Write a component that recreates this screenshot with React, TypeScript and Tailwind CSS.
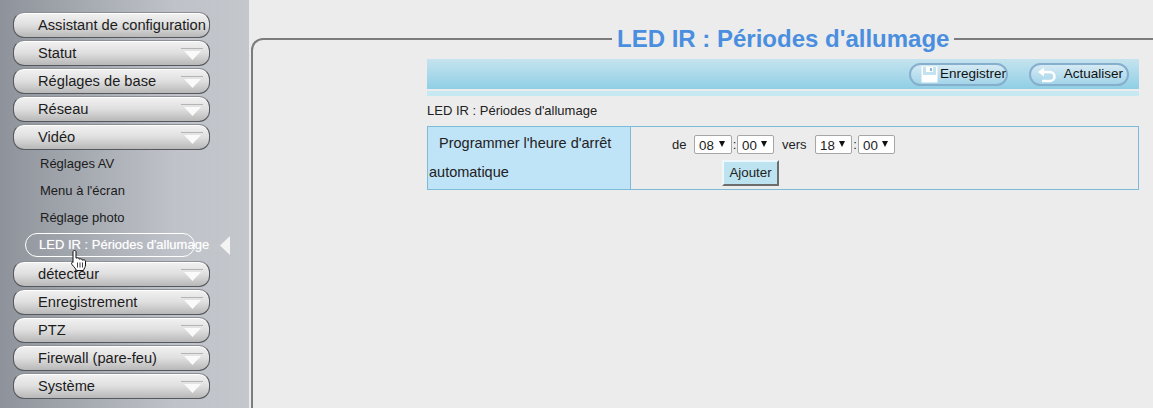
// Libraries
import { ReactNode } from "react";

const FONT = "font-['Liberation_Sans',Arial,sans-serif]";

const TOP_MENUS = ["Statut", "Réglages de base", "Réseau", "Vidéo"];
const BOTTOM_MENUS = ["détecteur", "Enregistrement", "PTZ", "Firewall (pare-feu)", "Système"];
const SUB_ITEMS = ["Réglages AV", "Menu à l'écran", "Réglage photo"];

function MenuButton({ label, arrow = true }: { label: string; arrow?: boolean }) {
  return (
    <div className="relative flex items-center h-[26px] w-[197px] pl-[24px] rounded-[11px] border border-[#55585e] border-t-[#8c8f94] bg-gradient-to-b from-[#f2f2f2] via-[#dfdfdf] to-[#b8b8b8] text-[14.67px] text-[#1c1c1c] whitespace-nowrap shadow-[inset_0_1px_0_#ffffff]">
      {label}
      {arrow && (
        <svg className="absolute right-[6px] top-[7px]" width="22" height="13" viewBox="0 0 22 13">
          <rect x="0" y="0" width="22" height="1" fill="#b4b4b4" />
          <polygon points="3,3 20,3 11.5,12" fill="#fafafa" />
        </svg>
      )}
    </div>
  );
}

function HandCursor() {
  return (
    <svg className="absolute left-[71px] top-[250px]" width="16" height="21" viewBox="0 0 16 21">
      <path
        d="M3.500 .5C4.500 .5 5 1 5 2V8H6C7 7.500 8 8 8 9H9C10 8.500 11 9 11 10H12C13 9.500 14.500 10.200 14.500 11.200V15C14.500 17 13 18.500 12.500 20.500H5.500C5 19 3 17 1 14.500C0 13 1 11.500 2 12.500V2C2 1 2.500 .5 3.500 .5Z"
        fill="#ffffff"
        stroke="#111111"
        strokeWidth="1"
      />
      <path d="M6.500 12.500v5M9 12.500v5M11.500 12.500v5" stroke="#111111" strokeWidth="0.800" />
    </svg>
  );
}

function Sidebar() {
  return (
    <aside className="relative w-[249px] shrink-0 h-[408px] pt-[12px] pl-[13px] flex flex-col gap-[2px] bg-gradient-to-r from-[#8e929a] via-[#bfc3c9] via-70% to-[#c4c7cc]">
      <MenuButton label="Assistant de configuration" arrow={false} />
      {TOP_MENUS.map((label) => (
        <MenuButton key={label} label={label} />
      ))}

      <div className="flex flex-col -mt-[2px]">
        {SUB_ITEMS.map((label) => (
          <div key={label} className="h-[27px] pl-[27px] flex items-center text-[13px] text-[#1c1c1c]">
            {label}
          </div>
        ))}
        <div className="h-[28px] flex items-center pl-[12px]">
          <div className="flex items-center w-[170px] h-[24px] pl-[13px] rounded-[12px] border border-white text-[13px] text-white whitespace-nowrap [text-shadow:0_0_1px_rgba(255,255,255,0.6)]">
            LED IR : Périodes d'allumage
          </div>
          <svg className="ml-[25px]" width="10" height="19" viewBox="0 0 10 19">
            <polygon points="0,9.500 10,0 10,19" fill="#f4f4f4" />
          </svg>
        </div>
      </div>

      {BOTTOM_MENUS.map((label) => (
        <MenuButton key={label} label={label} />
      ))}
      <HandCursor />
    </aside>
  );
}

function ToolButton({ icon, label, className }: { icon: ReactNode; label: string; className: string }) {
  return (
    <div className={`flex items-center justify-end h-[23px] rounded-full border-[2px] border-[#86aecd] bg-gradient-to-b from-[#d5eaf3] to-[#a3d4e9] text-[13.5px] text-[#111111] relative ${className}`}>
      {icon}
      {label}
    </div>
  );
}

function SaveIcon() {
  return (
    <svg className="absolute left-[10px] top-[1px]" width="17" height="17" viewBox="0 0 17 17">
      <rect x="0.500" y="0.500" width="16" height="16" fill="#ffffff" />
      <rect x="2" y="1" width="13" height="8" fill="#c4e2ef" />
      <rect x="5" y="1" width="7" height="5" fill="#ffffff" />
      <rect x="9" y="2" width="2" height="3" fill="#8fb6cf" />
    </svg>
  );
}

function BackIcon() {
  return (
    <svg className="absolute left-[6px] top-[2px]" width="20" height="16" viewBox="0 0 20 16">
      <path d="M4 5H13a4.500 4.500 0 0 1 0 9H5" fill="none" stroke="#ffffff" strokeWidth="2.500" />
      <polygon points="1,5 7,0.500 7,9.500" fill="#ffffff" />
    </svg>
  );
}

function TimeSelect({ value, width }: { value: string; width: string }) {
  return (
    <span className={`relative inline-block h-[19px] ${width}`}>
      <select
        defaultValue={value}
        className="appearance-none w-full h-full pl-[4px] bg-white border border-[#a6a6a6] rounded-[2px] text-[13.33px] text-[#222222] outline-none"
      >
        <option value={value}>{value}</option>
      </select>
      <svg className="absolute right-[7px] top-[6px]" width="6" height="6" viewBox="0 0 6 6">
        <polygon points="0,0 6,0 3,6" fill="#111111" />
      </svg>
    </span>
  );
}

function ScheduleTable() {
  return (
    <div className="flex h-[64px] border border-[#7dbcd9] text-[#222222]">
      <div className="w-[203px] shrink-0 bg-[#bfe3f7] border-r border-[#7dbcd9] px-[1px] text-[14.5px] leading-[29px] pt-[2px]">
        <span className="pl-[10px]">Programmer l'heure d'arrêt</span>
        <br />
        automatique
      </div>
      <div className="flex-1 pt-[8px] text-[13px]">
        <div className="flex items-center h-[19px] pl-[41px]">
          <span className="w-[22px]">de</span>
          <TimeSelect value="08" width="w-[38px]" />
          <span className="w-[5px] text-center">:</span>
          <TimeSelect value="00" width="w-[37px]" />
          <span className="ml-[8px] w-[33px]">vers</span>
          <TimeSelect value="18" width="w-[37px]" />
          <span className="w-[6px] text-center">:</span>
          <TimeSelect value="00" width="w-[37px]" />
        </div>
        <button className="block ml-[91px] mt-[6px] w-[57px] h-[26px] bg-[#bde3f1] border-[2px] border-[#eef7fb] border-r-[#6d6d6d] border-b-[#6d6d6d] text-[13.33px] text-[#222222]">
          Ajouter
        </button>
      </div>
    </div>
  );
}

export default function App() {
  return (
    <div className={`${FONT} flex w-[1153px] h-[408px] overflow-hidden bg-[#ececec]`}>
      <Sidebar />
      <main className="flex-1 pl-[2px] pt-[25px] min-w-0">
        <fieldset className="h-[400px] pl-[174px] pr-[14px] border-t-2 border-l-2 border-[#7c7c7c] rounded-tl-[12px]">
          <legend className="ml-[185px] px-[5px] text-[24px] leading-[28px] font-bold text-[#4a8fdf] whitespace-nowrap">
            LED IR : Périodes d'allumage
          </legend>

          <div className="mt-[6px] flex items-center justify-end gap-[21px] h-[30px] pr-[10px] bg-gradient-to-b from-[#c5e3ee] to-[#8fcfe6]">
            <ToolButton icon={<SaveIcon />} label="Enregistrer" className="w-[99px]" />
            <ToolButton icon={<BackIcon />} label="Actualiser" className="w-[100px] pr-[4px]" />
          </div>
          <div className="mt-[2px] h-[5px] bg-[#c6e8f2]" />

          <p className="mt-[3px] h-[24px] flex items-center text-[13px] text-[#222222]">LED IR : Périodes d'allumage</p>
          <div className="mt-[3px]">
            <ScheduleTable />
          </div>
        </fieldset>
      </main>
    </div>
  );
}
